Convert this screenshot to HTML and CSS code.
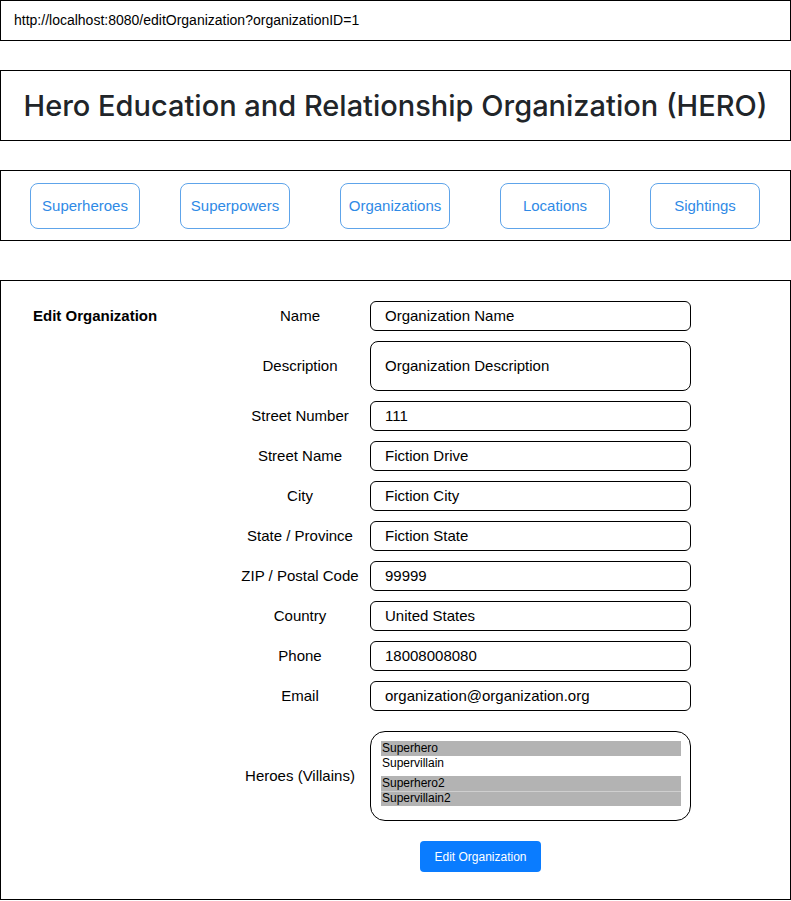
FILE: index.html
```html
<!DOCTYPE html>
<html>
<head>
<meta charset="utf-8">
<link rel="stylesheet" href="styles.css">
</head>
<body>
<div class="urlbar">http://localhost:8080/editOrganization?organizationID=1</div>
<header class="titlebox"><h1>Hero Education and Relationship Organization (HERO)</h1></header>
<nav class="navbox">
  <a class="nav-btn">Superheroes</a>
  <a class="nav-btn">Superpowers</a>
  <a class="nav-btn wide">Organizations</a>
  <a class="nav-btn wide">Locations</a>
  <a class="nav-btn">Sightings</a>
</nav>
<main class="mainbox">
  <h2 class="heading">Edit Organization</h2>
  <form class="form">
    <label class="lbl">Name</label><div class="field">Organization Name</div>
    <label class="lbl">Description</label><div class="field tall">Organization Description</div>
    <label class="lbl">Street Number</label><div class="field">111</div>
    <label class="lbl">Street Name</label><div class="field">Fiction Drive</div>
    <label class="lbl">City</label><div class="field">Fiction City</div>
    <label class="lbl">State / Province</label><div class="field">Fiction State</div>
    <label class="lbl">ZIP / Postal Code</label><div class="field">99999</div>
    <label class="lbl">Country</label><div class="field">United States</div>
    <label class="lbl">Phone</label><div class="field">18008008080</div>
    <label class="lbl">Email</label><div class="field">organization@organization.org</div>
    <label class="lbl heroes-lbl">Heroes (Villains)</label>
    <div class="select heroes-sel">
      <div class="opt sel">Superhero</div>
      <div class="opt">Supervillain</div>
      <div class="opt sel gap">Superhero2</div>
      <div class="opt sel line">Supervillain2</div>
    </div>
    <div class="btn-cell"><button type="button" class="submit">Edit Organization</button></div>
  </form>
</main>
</body>
</html>
```
FILE: styles.css
```css
* { box-sizing: border-box; }
html, body { margin: 0; padding: 0; background: #fff; }
body { font-family: "Liberation Sans", Arial, sans-serif; color: #000; width: 791px; }

.urlbar {
  height: 41px;
  border: 1px solid #000;
  padding: 0 0 1px 13px;
  display: flex;
  align-items: center;
  font-size: 14px;
  margin-bottom: 29px;
}

.titlebox {
  height: 71px;
  border: 1px solid #000;
  display: flex;
  align-items: center;
  justify-content: center;
  margin-bottom: 29px;
}
.titlebox h1 {
  margin: 0;
  font-family: Inter, "Noto Sans", sans-serif;
  font-weight: 500;
  font-size: 29px;
  color: #212529;
}

.navbox {
  height: 71px;
  border: 1px solid #000;
  display: flex;
  align-items: center;
  padding-left: 29px;
  gap: 40px;
  margin-bottom: 39px;
}
.nav-btn {
  width: 110px;
  height: 46px;
  border: 1px solid #5ea4ea;
  border-radius: 8px;
  color: #2f8ae6;
  font-size: 15px;
  display: flex;
  align-items: center;
  justify-content: center;
}
.nav-btn.wide { margin-left: 10px; }

.mainbox {
  height: 620px;
  border: 1px solid #000;
  display: flex;
  padding: 20px 0 0 32px;
}
.heading {
  margin: 0;
  width: 197px;
  height: 29px;
  font-size: 15px;
  font-weight: bold;
  display: flex;
  align-items: center;
}

.form {
  display: grid;
  grid-template-columns: 140px 321px;
  row-gap: 10px;
  align-content: start;
}
.lbl {
  font-size: 15px;
  display: flex;
  align-items: center;
  justify-content: center;
  padding-bottom: 1px;
}
.field {
  height: 30px;
  border: 1px solid #000;
  border-radius: 6px;
  padding: 0 0 1px 14px;
  font-size: 15px;
  display: flex;
  align-items: center;
}
.field.tall { height: 50px; border-radius: 8px; }

.heroes-lbl, .heroes-sel { margin-top: 10px; }
.select {
  height: 90px;
  border: 1px solid #000;
  border-radius: 15px;
  padding: 9px 9px 0 10px;
}
.opt {
  height: 15px;
  font-size: 12px;
  line-height: 15px;
  padding-left: 1px;
}
.opt.sel { background: #b3b3b3; }
.opt.gap { margin-top: 5px; }
.opt.line { border-top: 1px solid #cfcfcf; height: 15px; line-height: 13px; }

.btn-cell { grid-column: 2; padding-left: 50px; margin-top: 10px; }
.submit {
  width: 121px;
  height: 31px;
  border: none;
  border-radius: 4px;
  background: #0a7cff;
  color: #fff;
  font-family: "Liberation Sans", Arial, sans-serif;
  font-size: 12px;
  padding: 0;
}
```
